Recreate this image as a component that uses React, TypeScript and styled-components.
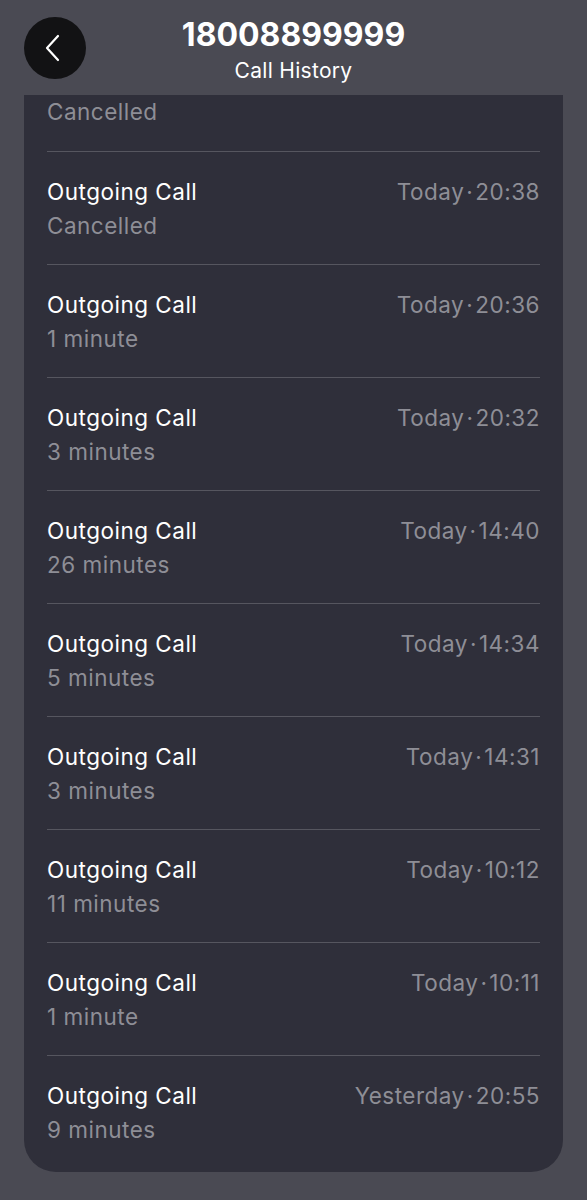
import React from "react";
import styled, { createGlobalStyle } from "styled-components";

interface iCall {
  kind: string;
  detail: string;
  day: string;
  time: string;
}

const calls: iCall[] = [
  { kind: "Outgoing Call", detail: "Cancelled", day: "Today", time: "20:38" },
  { kind: "Outgoing Call", detail: "1 minute", day: "Today", time: "20:36" },
  { kind: "Outgoing Call", detail: "3 minutes", day: "Today", time: "20:32" },
  { kind: "Outgoing Call", detail: "26 minutes", day: "Today", time: "14:40" },
  { kind: "Outgoing Call", detail: "5 minutes", day: "Today", time: "14:34" },
  { kind: "Outgoing Call", detail: "3 minutes", day: "Today", time: "14:31" },
  { kind: "Outgoing Call", detail: "11 minutes", day: "Today", time: "10:12" },
  { kind: "Outgoing Call", detail: "1 minute", day: "Today", time: "10:11" },
  { kind: "Outgoing Call", detail: "9 minutes", day: "Yesterday", time: "20:55" },
];

const App: React.FC = () => {
  return (
    <Page>
      <Global />
      <Header>
        <BackButton aria-label="Back">
          <svg width="20" height="28" viewBox="0 0 20 28" fill="none">
            <polyline
              points="15,2 4,14 15,26"
              stroke="#fff"
              strokeWidth="2.2"
              strokeLinecap="round"
              strokeLinejoin="round"
            />
          </svg>
        </BackButton>
        <Titles>
          <Number>18008899999</Number>
          <Sub>Call History</Sub>
        </Titles>
      </Header>
      <Card>
        <Partial>
          <Detail>Cancelled</Detail>
        </Partial>
        {calls.map((c, i) => (
          <Row key={i} last={i === calls.length - 1}>
            <Top>
              <Kind>{c.kind}</Kind>
              <When>
                {c.day}
                <Dot>·</Dot>
                {c.time}
              </When>
            </Top>
            <Detail>{c.detail}</Detail>
          </Row>
        ))}
      </Card>
    </Page>
  );
};
export default App;

const Global = createGlobalStyle`
  html, body {
    margin: 0;
    padding: 0;
    background: #4a4a53;
  }
  * {
    box-sizing: border-box;
  }
`;

const Page = styled.div`
  width: 587px;
  height: 1200px;
  background: #4a4a53;
  font-family: Inter, "Noto Sans", sans-serif;
  overflow: hidden;
`;

const Header = styled.div`
  height: 95px;
  display: flex;
  align-items: flex-start;
  justify-content: center;
  position: relative;
`;

const BackButton = styled.div`
  position: absolute;
  left: 24px;
  top: 17px;
  width: 62px;
  height: 62px;
  border-radius: 50%;
  background: #121214;
  display: flex;
  align-items: center;
  justify-content: center;
  svg {
    margin-left: -4px;
  }
`;

const Titles = styled.div`
  display: flex;
  flex-direction: column;
  align-items: center;
  padding-top: 15px;
`;

const Number = styled.div`
  font-size: 32px;
  font-weight: 700;
  color: #fff;
  line-height: 40px;
`;

const Sub = styled.div`
  font-size: 21px;
  color: #fff;
  line-height: 26px;
  margin-top: 3px;
  letter-spacing: 0.3px;
`;

const Card = styled.div`
  margin: 0 24px;
  background: #2f2f3a;
  border-radius: 0 0 32px 32px;
  padding: 0 23px;
`;

const Partial = styled.div`
  padding-bottom: 22px;
  border-bottom: 1px solid #56565f;
`;

const Row = styled.div<{ last: boolean }>`
  padding: 23px 0 ${(p) => (p.last ? "25px" : "21px")};
  border-bottom: ${(p) => (p.last ? "none" : "1px solid #56565f")};
`;

const Top = styled.div`
  display: flex;
  justify-content: space-between;
  align-items: center;
`;

const Text = styled.div`
  font-size: 22.5px;
  line-height: 34px;
  letter-spacing: 0.5px;
`;

const Kind = styled(Text)`
  color: #fff;
`;

const When = styled(Text)`
  color: #8e8e96;
`;

const Dot = styled.span`
  margin: 0 2px;
`;

const Detail = styled(Text)`
  color: #8e8e96;
`;
